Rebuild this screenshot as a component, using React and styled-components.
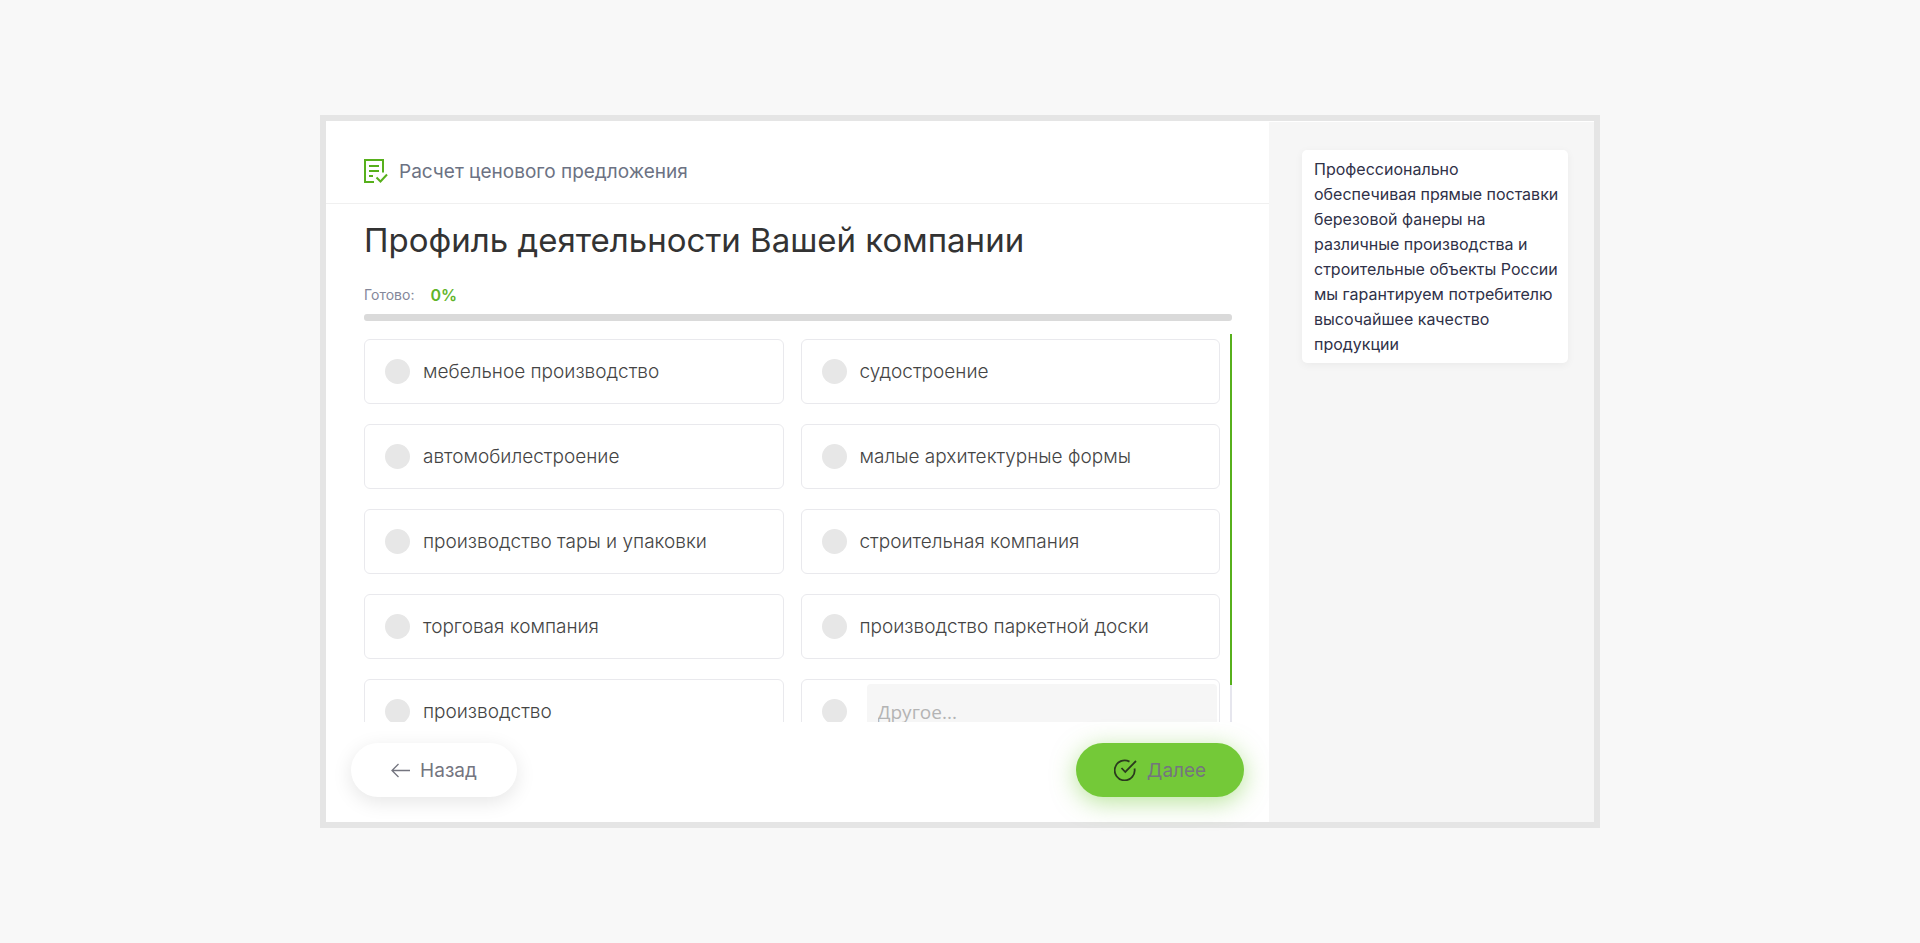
import React, { useState } from "react";
import styled, { createGlobalStyle } from "styled-components";

const options = [
  "мебельное производство",
  "судостроение",
  "автомобилестроение",
  "малые архитектурные формы",
  "производство тары и упаковки",
  "строительная компания",
  "торговая компания",
  "производство паркетной доски",
  "производство",
];

function App() {
  const [profile, setProfile] = useState("");
  const [other, setOther] = useState("");
  const percent = 0;

  return (
    <Page>
      <GlobalStyle />
      <Quiz>
        <Main>
          <Header>
            <FormIcon />
            <HeaderText>Расчет ценового предложения</HeaderText>
          </Header>
          <Title>Профиль деятельности Вашей компании</Title>
          <Status>
            Готово: <Percent>{percent}%</Percent>
          </Status>
          <Bar>
            <BarFill style={{ width: `${percent}%` }} />
          </Bar>
          <ListRow>
            <List>
              {options.map((item) => (
                <Option key={item}>
                  <Radio
                    type="radio"
                    name="profile"
                    checked={profile === item}
                    onChange={() => setProfile(item)}
                  />
                  <OptionText>{item}</OptionText>
                </Option>
              ))}
              <OtherOption>
                <Radio
                  type="radio"
                  name="profile"
                  aria-label="Другое"
                  checked={profile === "other"}
                  onChange={() => setProfile("other")}
                />
                <OtherInput
                  type="text"
                  aria-label="Другое"
                  placeholder="Другое..."
                  value={other}
                  onChange={(e) => setOther(e.target.value)}
                />
              </OtherOption>
            </List>
            <Track>
              <Thumb />
            </Track>
          </ListRow>
          <Footer>
            <BackBtn type="button">
              <ArrowIcon />
              Назад
            </BackBtn>
            <NextBtn type="button">
              <CheckIcon />
              Далее
            </NextBtn>
          </Footer>
        </Main>
        <Aside>
          <Note>
            Профессионально обеспечивая прямые поставки березовой фанеры на
            различные производства и строительные объекты России мы гарантируем
            потребителю высочайшее качество продукции
          </Note>
        </Aside>
      </Quiz>
    </Page>
  );
}
export default App;

const FormIcon = () => (
  <svg width="24" height="25" viewBox="0 0 24 25" fill="none" stroke="#57b01c" strokeWidth="2">
    <path d="M19 13.5V1H1v22h9" />
    <path d="M5 7h10M5 12h10M5 17h4" />
    <path d="M12.5 18.5l4 4 6.5-7" />
  </svg>
);

const ArrowIcon = () => (
  <svg width="20" height="15" viewBox="0 0 20 15" fill="none" stroke="#74757f" strokeWidth="1.3">
    <path d="M19 7.5H1M7.5 1L1 7.5 7.5 14" />
  </svg>
);

const CheckIcon = () => (
  <svg width="23" height="22" viewBox="0 0 23 22" fill="none" stroke="#2b3a1e" strokeWidth="1.8">
    <path d="M15.5 2.6A10 10 0 1 0 20.5 9.5" />
    <path d="M7.5 9l3.8 4L22 2" />
  </svg>
);

const GlobalStyle = createGlobalStyle`
  * {
    box-sizing: border-box;
  }
  body {
    margin: 0;
    background-color: #f8f8f8;
    font-family: Inter, "Open Sans", sans-serif;
  }
`;

const Page = styled.div`
  display: flex;
  min-height: 100vh;
  align-items: center;
  justify-content: center;
`;
const Quiz = styled.div`
  display: flex;
  width: 100%;
  max-width: 1280px;
  border: 6px solid #e5e5e5;
  background-color: #fff;
`;
const Main = styled.main`
  flex: 1;
  min-width: 0;
`;
const Header = styled.header`
  display: flex;
  align-items: center;
  gap: 11px;
  height: 83px;
  padding: 18px 38px 0;
  border-bottom: 1px solid #f0f0f0;
`;
const HeaderText = styled.span`
  font-size: 19px;
  color: #6c7283;
`;
const Title = styled.h1`
  margin: 0;
  padding: 12px 38px 0;
  font-size: 33px;
  font-weight: 400;
  line-height: 48px;
  color: #333;
`;
const Status = styled.div`
  display: flex;
  align-items: center;
  gap: 16px;
  padding: 19px 38px 0;
  font-size: 14px;
  line-height: 24px;
  color: #84879a;
`;
const Percent = styled.b`
  font-size: 16px;
  font-weight: 600;
  color: #5fb42a;
`;
const Bar = styled.div`
  height: 7px;
  margin: 7px 37px 0 38px;
  border-radius: 3px;
  background-color: #dadada;
  overflow: hidden;
`;
const BarFill = styled.div`
  height: 100%;
  background-color: #57b01c;
`;
const ListRow = styled.div`
  display: flex;
  gap: 10px;
  height: 388px;
  margin: 13px 37px 0 38px;
`;
const List = styled.div`
  flex: 1;
  display: grid;
  grid-template-columns: 1fr 1fr;
  grid-auto-rows: 65px;
  gap: 20px 17px;
  padding: 5px 0;
  overflow-y: auto;
  scrollbar-width: none;
`;
const Option = styled.label`
  display: flex;
  align-items: center;
  padding: 0 20px;
  border: 1px solid #e9e9ed;
  border-radius: 6px;
  cursor: pointer;
`;
const OtherOption = styled.div`
  display: flex;
  align-items: center;
  padding: 0 0 0 20px;
  border: 1px solid #e9e9ed;
  border-radius: 6px;
`;
const Radio = styled.input`
  appearance: none;
  flex: none;
  width: 25px;
  height: 25px;
  margin: 0;
  border-radius: 50%;
  background-color: #e7e7e7;
  cursor: pointer;

  &:checked {
    background-color: #57b01c;
  }
`;
const OptionText = styled.span`
  margin-left: 13px;
  font-size: 19px;
  font-weight: 300;
  color: #444;
`;
const OtherInput = styled.input`
  flex: 1;
  min-width: 0;
  height: 55px;
  margin: 0 2px 0 20px;
  padding: 0 11px;
  border: 0;
  border-radius: 4px;
  background-color: #f6f6f6;
  font-family: "Open Sans", "Noto Sans", sans-serif;
  font-size: 19px;
  color: #444;

  &::placeholder {
    color: #b4b4b4;
  }
`;
const Track = styled.div`
  width: 2px;
  background-color: #e6e6ee;
`;
const Thumb = styled.div`
  height: 351px;
  background-color: #57b01c;
`;
const Footer = styled.footer`
  display: flex;
  justify-content: space-between;
  padding: 21px 25px 25px;
`;
const Btn = styled.button`
  display: flex;
  align-items: center;
  justify-content: center;
  height: 54px;
  border: 0;
  border-radius: 27px;
  font-family: inherit;
  font-size: 19px;
  color: #74757f;
  cursor: pointer;
`;
const BackBtn = styled(Btn)`
  gap: 9px;
  width: 166px;
  background-color: #fff;
  box-shadow: 0 5px 20px rgba(0, 0, 0, 0.1);
`;
const NextBtn = styled(Btn)`
  gap: 10px;
  width: 168px;
  background-color: #74c938;
  box-shadow: 0 5px 24px rgba(116, 201, 56, 0.5);
`;
const Aside = styled.aside`
  width: 325px;
  margin-top: 1px;
  padding: 28px 26px 28px 33px;
  background-color: #f6f6f6;
`;
const Note = styled.p`
  margin: 0;
  padding: 7px 8px 6px 12px;
  border-radius: 5px;
  background-color: #fff;
  box-shadow: 0 2px 8px rgba(0, 0, 0, 0.05);
  font-size: 16px;
  line-height: 25px;
  color: #2f3148;
`;
